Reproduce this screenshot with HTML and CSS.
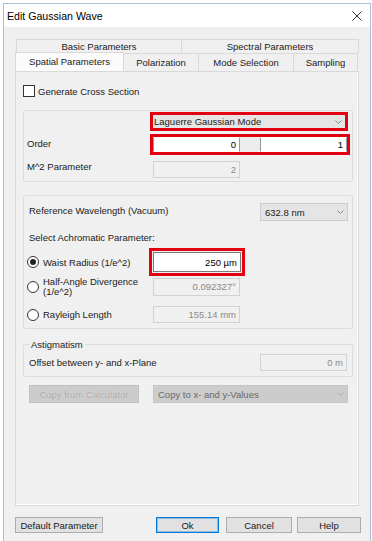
FILE: index.html
```html
<!DOCTYPE html>
<html lang="en">
<head>
    <meta charset="UTF-8">
    <title>Edit Gaussian Wave</title>
    <link rel="stylesheet" href="styles.css">
</head>
<body>
    <div class="window">
        <div class="titlebar">
            <span class="title">Edit Gaussian Wave</span>
            <svg class="close" width="10" height="10" viewBox="0 0 10 10">
                <path d="M0.5 0.5 L9.5 9.5 M9.5 0.5 L0.5 9.5" stroke="#333" stroke-width="1" fill="none"/>
            </svg>
        </div>

        <div class="dialog">
            <div class="tabs">
                <div class="tab-row back">
                    <div class="tab w-basic">Basic Parameters</div>
                    <div class="tab w-spectral">Spectral Parameters</div>
                </div>
                <div class="tab-row front">
                    <div class="tab active w-spatial">Spatial Parameters</div>
                    <div class="tab w-polar">Polarization</div>
                    <div class="tab w-mode">Mode Selection</div>
                    <div class="tab w-sampling">Sampling</div>
                </div>
            </div>

            <div class="panel">
                <div class="check-row">
                    <span class="checkbox"></span>
                    <span>Generate Cross Section</span>
                </div>

                <div class="group mode-group">
                    <div class="combo marked wide">
                        <span>Laguerre Gaussian Mode</span>
                        <svg class="chevron" width="7" height="4" viewBox="0 0 7 4"><path d="M0.5 0.5 L3.5 3.5 L6.5 0.5" stroke="#888" fill="none"/></svg>
                    </div>
                    <div class="label">Order</div>
                    <div class="order-pair">
                        <input class="field" type="text" value="0">
                        <input class="field" type="text" value="1">
                    </div>
                    <div class="label">M^2 Parameter</div>
                    <div class="field disabled m2">2</div>
                </div>

                <div class="group wave-group">
                    <div class="row wl-row">
                        <span class="text">Reference Wavelength (Vacuum)</span>
                        <div class="combo small">
                            <span>632.8 nm</span>
                            <svg class="chevron" width="7" height="4" viewBox="0 0 7 4"><path d="M0.5 0.5 L3.5 3.5 L6.5 0.5" stroke="#888" fill="none"/></svg>
                        </div>
                    </div>
                    <div class="row select-row">
                        <span class="text">Select Achromatic Parameter:</span>
                    </div>
                    <div class="row radio-row waist-row">
                        <div class="radio-label"><span class="radio checked"></span><span>Waist Radius (1/e^2)</span></div>
                        <input class="field waist" type="text" value="250 µm">
                    </div>
                    <div class="row radio-row half-row">
                        <div class="radio-label"><span class="radio"></span><span class="two-line">Half-Angle Divergence<br>(1/e^2)</span></div>
                        <div class="field disabled half">0.092327°</div>
                    </div>
                    <div class="row radio-row rayleigh-row">
                        <div class="radio-label"><span class="radio"></span><span>Rayleigh Length</span></div>
                        <div class="field disabled rayleigh">155.14 mm</div>
                    </div>
                </div>

                <fieldset class="astig">
                    <legend>Astigmatism</legend>
                    <div class="row astig-row">
                        <span>Offset between y- and x-Plane</span>
                        <div class="field disabled offset">0 m</div>
                    </div>
                </fieldset>

                <div class="copy-row">
                    <button class="btn-disabled" disabled>Copy from Calculator</button>
                    <div class="combo copy-combo">
                        <span>Copy to x- and y-Values</span>
                        <svg class="chevron" width="7" height="4" viewBox="0 0 7 4"><path d="M0.5 0.5 L3.5 3.5 L6.5 0.5" stroke="#aaa" fill="none"/></svg>
                    </div>
                </div>
            </div>

            <div class="footer">
                <button class="btn w-default">Default Parameter</button>
                <button class="btn primary w-ok">Ok</button>
                <button class="btn w-cancel">Cancel</button>
                <button class="btn w-help">Help</button>
            </div>
        </div>
    </div>
</body>
</html>
```

FILE: styles.css
```css
* {
    box-sizing: border-box;
}

body {
    margin: 0;
    background-color: #fff;
    overflow: hidden;
    font-family: 'Liberation Sans', Arial, sans-serif;
    font-size: 9.5px;
    color: #1a1a1a;
}

.window {
    margin: 3px 0 0 3px;
    width: 368px;
    height: 538px;
    border: 1px solid #a9bfd9;
    border-bottom: none;
    display: flex;
    flex-direction: column;
}

.titlebar {
    height: 23px;
    flex-shrink: 0;
    background-color: #fff;
    display: flex;
    align-items: center;
    justify-content: space-between;
    padding: 0 8px 0 3px;
}

.title {
    font-size: 10.6px;
    color: #000;
}

.dialog {
    background-color: #f0f0f0;
    flex: 1;
    padding: 12px 0 0 11px;
}

/* tabs */
.tab-row {
    display: flex;
    line-height: 13px;
}

.tab-row.back {
    margin-left: 1px;
    height: 14px;
}

.tab-row.front {
    height: 18px;
}

.tab {
    text-align: center;
    border: 1px solid #d9d9d9;
    border-bottom: none;
    margin-right: -1px;
    background-color: #f0f0f0;
}

.tab-row.front .tab {
    line-height: 17px;
}

.tab.active {
    background-color: #fbfbfb;
    height: 19px;
    margin-top: -1px;
    line-height: 19px;
    position: relative;
    z-index: 1;
}

.w-basic { width: 166px; }
.w-spectral { width: 178px; }
.w-spatial { width: 109px; }
.w-polar { width: 76px; }
.w-mode { width: 96px; }
.w-sampling { width: 65px; }

.panel {
    width: 344px;
    height: 435px;
    border: 1px solid #d9d9d9;
    box-shadow: inset -1px -1px 0 #fff;
    padding: 13px 0 0 7px;
}

.check-row {
    display: flex;
    align-items: center;
    gap: 3px;
    height: 12px;
}

.checkbox {
    width: 12px;
    height: 12px;
    border: 1px solid #333;
    background-color: #fff;
}

/* group boxes */
.group {
    width: 330px;
    border: 1px solid #dcdcdc;
    border-radius: 2px;
    margin-top: 13px;
}

.mode-group {
    display: grid;
    grid-template-columns: 126px 87px 20px 87px;
    padding: 0 0 3px 3px;
}

.label {
    align-self: center;
}

.combo {
    display: flex;
    align-items: center;
    justify-content: space-between;
    background-color: #e5e5e5;
    border: 1px solid #cdcdcd;
    padding: 0 3px 0 4px;
    color: #1a1a1a;
}

.combo.marked {
    border: 3px solid #e30010;
    padding-left: 1px;
}

.combo.wide {
    grid-column: 2 / 5;
    height: 19px;
    margin: 1px -1px 0 -3px;
}

.chevron {
    flex-shrink: 0;
}

.order-pair {
    grid-column: 2 / 5;
    display: flex;
    justify-content: space-between;
    height: 21px;
    margin: 3px -3px 0;
    border: 3px solid #e30010;
    background-color: #ececec;
}

.field {
    display: block;
    height: 17px;
    width: 87px;
    border: 1px solid #c9c9c9;
    background-color: #fff;
    text-align: right;
    padding: 0 3px;
    font: inherit;
    color: #000;
    line-height: 15px;
    margin: 0;
}

.order-pair .field {
    height: 15px;
    line-height: 13px;
    border-color: #9a9a9a;
    border-top-color: #fff;
    border-bottom-color: #fff;
}

.field.disabled {
    background-color: #f0f0f0;
    border-color: #d2d2d2;
    color: #8a8a8a;
}

.field.m2 {
    margin-top: 6px;
}

.wave-group {
    padding-bottom: 5px;
}

.row {
    display: flex;
    align-items: center;
}

.wl-row {
    margin-top: 7px;
    height: 18px;
    padding: 0 4px 0 5px;
    justify-content: space-between;
}

.wl-row .text {
    margin-top: -4px;
}

.combo.small {
    width: 88px;
    height: 18px;
}

.select-row {
    margin-top: 8px;
    height: 16px;
    padding-left: 5px;
}

.radio-row {
    padding-left: 3px;
}

.radio-label {
    width: 126px;
    display: flex;
    align-items: center;
    gap: 4px;
}

.radio {
    width: 12px;
    height: 12px;
    border: 1px solid #333;
    border-radius: 50%;
    background-color: #fff;
    display: flex;
    align-items: center;
    justify-content: center;
    flex-shrink: 0;
}

.radio.checked::after {
    content: "";
    width: 6px;
    height: 6px;
    border-radius: 50%;
    background-color: #222;
}

.two-line {
    line-height: 10px;
}

.waist-row {
    margin-top: 7px;
}

.field.waist {
    height: 20px;
    width: 88px;
    line-height: 18px;
    border-color: #7a7a7a;
    outline: 3px solid #e30010;
    outline-offset: 1px;
}

.half-row {
    margin-top: 5px;
}

.field.half {
    height: 18px;
    line-height: 16px;
}

.rayleigh-row {
    margin-top: 9px;
}

/* astigmatism */
.astig {
    width: 330px;
    margin: 10px 0 0;
    padding: 4px 5px 5px;
    border: 1px solid #dcdcdc;
    border-radius: 2px;
    min-inline-size: 0;
}

.astig legend {
    padding: 0 2px;
    line-height: 11px;
}

.astig-row {
    justify-content: space-between;
}

.copy-row {
    display: flex;
    margin-top: 8px;
    height: 18px;
}

.btn-disabled {
    width: 110px;
    margin-left: 6px;
    background-color: #cccccc;
    border: 1px solid #c2c2c2;
    color: #a9a9a9;
    text-shadow: 0 0 1px #e8e8e8;
    font: inherit;
    padding: 0;
}

.copy-combo {
    width: 195px;
    margin-left: 14px;
    background-color: #cccccc;
    border-color: #c6c6c6;
    color: #6a6a6a;
}

/* footer buttons */
.footer {
    display: flex;
    margin-top: 11px;
}

.btn {
    height: 16px;
    background-color: #e1e1e1;
    border: 1px solid #adadad;
    font: inherit;
    color: #1a1a1a;
    padding: 0;
}

.btn.primary {
    border-color: #0078d7;
    box-shadow: inset 0 0 0 1px rgba(0, 120, 215, 0.35);
}

.w-default { width: 88px; }
.w-ok { width: 63px; margin-left: 53px; }
.w-cancel { width: 66px; margin-left: 7px; }
.w-help { width: 64px; margin-left: 5px; }
```
